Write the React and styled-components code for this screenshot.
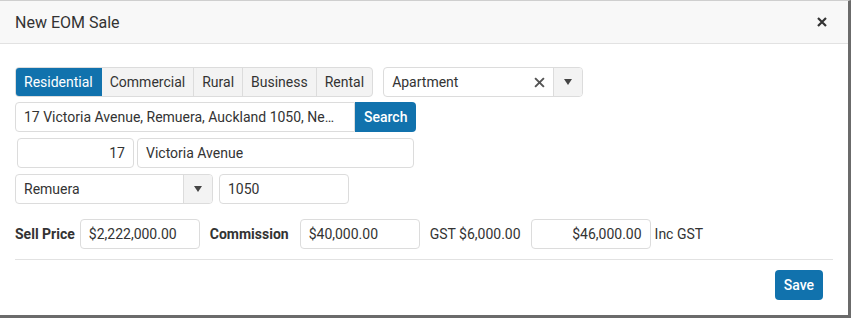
import styled, { createGlobalStyle } from 'styled-components';

const Global = createGlobalStyle`
  html, body {
    margin: 0;
    padding: 0;
    background: #fff;
  }
  body {
    font-family: Roboto, "Liberation Sans", sans-serif;
    font-size: 14px;
    color: #333;
  }
  * { box-sizing: border-box; }
`;

const Modal = styled.div`
  width: 851px;
  height: 318px;
  border-top: 1px solid #cfcfcf;
  border-right: 3px solid #6b6b6b;
  border-bottom: 3px solid #6b6b6b;
  background: #fff;
  display: flex;
  flex-direction: column;
`;

const Header = styled.div`
  height: 43px;
  background: #f8f8f8;
  border-bottom: 1px solid #e2e2e2;
  display: flex;
  align-items: center;
  justify-content: space-between;
  padding: 0 15px;

  h4 {
    margin: 0;
    font-size: 16px;
    font-weight: 400;
    color: #333;
  }
`;

const Close = styled.button`
  border: none;
  background: transparent;
  padding: 0;
  margin-right: 6px;
  display: flex;
  align-items: center;
  cursor: pointer;
`;

const Body = styled.div`
  padding: 23px 15px 0;
  display: flex;
  flex-direction: column;
`;

const Row = styled.div`
  display: flex;
  align-items: center;
  gap: ${(p) => p.$gap || 0}px;
  margin-bottom: ${(p) => p.$mb || 0}px;
  padding-left: ${(p) => p.$pl || 0}px;
`;

const Tabs = styled.div`
  display: flex;
  height: 30px;
  border: 1px solid #dcdcdc;
  border-radius: 4px;
  overflow: hidden;
  background: #f3f3f3;
`;

const Tab = styled.div`
  padding: 0 ${(p) => p.$px || 8}px;
  display: flex;
  align-items: center;
  color: ${(p) => (p.$active ? '#fff' : '#333')};
  background: ${(p) => (p.$active ? '#1172ad' : 'transparent')};
  border-left: ${(p) => (p.$first ? 'none' : '1px solid #dcdcdc')};
  margin: ${(p) => (p.$active ? '-1px 0 -1px -1px' : '0')};
  font-size: 14px;
`;

const Select = styled.div`
  width: ${(p) => p.$w}px;
  height: 30px;
  border: 1px solid #dcdcdc;
  border-radius: 4px;
  display: flex;
  align-items: stretch;
  overflow: hidden;
  margin-left: ${(p) => p.$ml || 0}px;
`;

const SelectValue = styled.div`
  flex: 1;
  display: flex;
  align-items: center;
  justify-content: space-between;
  padding: 0 8px;
`;

const Caret = styled.div`
  width: 29px;
  border-left: 1px solid #dcdcdc;
  background: #f3f3f3;
  display: flex;
  align-items: center;
  justify-content: center;

  &::after {
    content: '';
    border-left: 4px solid transparent;
    border-right: 4px solid transparent;
    border-top: 6px solid #444;
  }
`;

const Input = styled.div`
  width: ${(p) => p.$w}px;
  height: ${(p) => p.$h || 30}px;
  border: 1px solid #dcdcdc;
  border-radius: ${(p) => p.$radius || '4px'};
  padding: 0 8px;
  display: flex;
  align-items: center;
  justify-content: ${(p) => (p.$right ? 'flex-end' : 'flex-start')};
  white-space: nowrap;
  overflow: hidden;
  color: #333;
`;

const Button = styled.button`
  height: 30px;
  padding: 0 ${(p) => p.$px || 8}px;
  border: none;
  border-radius: ${(p) => p.$radius || '4px'};
  background: #1172ad;
  color: #fff;
  font-family: Roboto, "Liberation Sans", sans-serif;
  font-size: 14px;
  font-weight: 500;
`;

const Label = styled.span`
  font-weight: ${(p) => (p.$bold ? 700 : 400)};
  white-space: nowrap;
`;

const Rule = styled.div`
  height: 1px;
  background: #e2e2e2;
  margin: 10px 0 10px;
`;

const Footer = styled.div`
  display: flex;
  justify-content: flex-end;
  padding-right: 10px;
`;

function Cross({ size = 10, stroke = 2.2, color = '#333' }) {
  return (
    <svg width={size} height={size} viewBox="0 0 10 10">
      <path d="M1 1 L9 9 M9 1 L1 9" stroke={color} strokeWidth={stroke} strokeLinecap="butt" />
    </svg>
  );
}

export default function App() {
  const tabs = [
    { label: 'Residential', active: true, px: 9 },
    { label: 'Commercial', px: 8 },
    { label: 'Rural', px: 8 },
    { label: 'Business', px: 8 },
    { label: 'Rental', px: 8 },
  ];

  return (
    <>
      <Global />
      <Modal>
        <Header>
          <h4>New EOM Sale</h4>
          <Close>
            <Cross size={10} stroke={2.2} color="#333" />
          </Close>
        </Header>
        <Body>
          <Row $mb={5}>
            <Tabs>
              {tabs.map((t, i) => (
                <Tab key={t.label} $active={t.active} $first={i === 0 || i === 1} $px={t.px}>
                  {t.label}
                </Tab>
              ))}
            </Tabs>
            <Select $w={200} $ml={10}>
              <SelectValue>
                Apartment
                <Cross size={11} stroke={1.8} color="#555" />
              </SelectValue>
              <Caret />
            </Select>
          </Row>
          <Row $mb={6}>
            <Input $w={340} $radius="4px 0 0 4px">17 Victoria Avenue, Remuera, Auckland 1050, Ne…</Input>
            <Button $px={9} $radius="0 4px 4px 0">Search</Button>
          </Row>
          <Row $gap={3} $mb={6} $pl={2}>
            <Input $w={117} $right>17</Input>
            <Input $w={277}>Victoria Avenue</Input>
          </Row>
          <Row $gap={6} $mb={15}>
            <Select $w={198}>
              <SelectValue>Remuera</SelectValue>
              <Caret />
            </Select>
            <Input $w={130}>1050</Input>
          </Row>
          <Row>
            <Label $bold>Sell Price</Label>
            <Input $w={120} style={{ marginLeft: 5 }}>$2,222,000.00</Input>
            <Label $bold style={{ marginLeft: 10 }}>Commission</Label>
            <Input $w={120} style={{ marginLeft: 11 }}>$40,000.00</Input>
            <Label style={{ marginLeft: 10 }}>GST $6,000.00</Label>
            <Input $w={120} $right style={{ marginLeft: 10 }}>$46,000.00</Input>
            <Label style={{ marginLeft: 4 }}>Inc GST</Label>
          </Row>
          <Rule />
          <Footer>
            <Button $px={9}>Save</Button>
          </Footer>
        </Body>
      </Modal>
    </>
  );
}
